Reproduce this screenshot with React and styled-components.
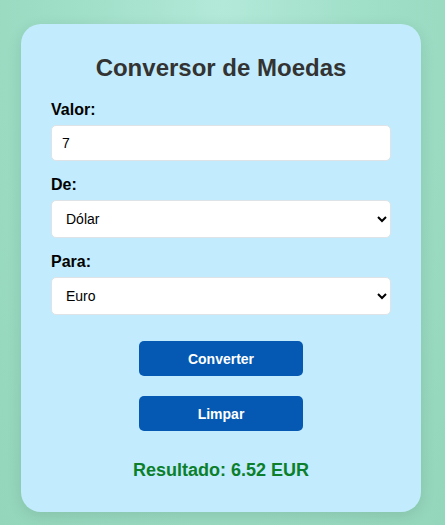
import React, { useState } from 'react';
import styled, { createGlobalStyle } from 'styled-components';

const GlobalStyle = createGlobalStyle`
  html, body {
    margin: 0;
    padding: 0;
  }
  body {
    min-height: 525px;
    font-family: "Liberation Sans", Arial, sans-serif;
    background: radial-gradient(ellipse at 50% 0%, #b3e9d9 0%, #a0dfc8 45%, #93d6bb 100%);
  }
`;

const Page = styled.div`
  display: flex;
  justify-content: center;
  padding: 24px 3px 14px 0;
`;

const Card = styled.div`
  width: 400px;
  box-sizing: border-box;
  padding: 30px 30px 31px;
  background: #c2ecfd;
  border-radius: 20px;
  box-shadow: 0 4px 15px rgba(0, 0, 0, 0.1);
  display: flex;
  flex-direction: column;
`;

const Title = styled.h2`
  margin: 0 0 19px;
  font-size: 24px;
  line-height: 28px;
  font-weight: bold;
  color: #333;
  text-align: center;
`;

const Label = styled.label`
  display: block;
  font-size: 16px;
  line-height: 18px;
  font-weight: bold;
  color: #000;
  margin-bottom: 6px;
`;

const Field = styled.div`
  margin-bottom: ${p => p.$last ? '26px' : '15px'};
`;

const Input = styled.input`
  display: block;
  width: 100%;
  height: 36px;
  box-sizing: border-box;
  padding: 0 10px;
  border: 1px solid #dde3e6;
  border-radius: 5px;
  background: #fff;
  font-family: "Liberation Sans", Arial, sans-serif;
  font-size: 14px;
  color: #000;
  outline: none;
`;

const Select = styled.select`
  display: block;
  width: 100%;
  height: 38px;
  box-sizing: border-box;
  padding: 0 10px;
  border: 1px solid #dde3e6;
  border-radius: 5px;
  background: #fff;
  font-family: "Liberation Sans", Arial, sans-serif;
  font-size: 14px;
  color: #000;
  outline: none;
`;

const Button = styled.button`
  display: block;
  align-self: center;
  width: 164px;
  height: 35px;
  margin-bottom: ${p => p.$gap || '0'};
  border: none;
  border-radius: 5px;
  background: #0559b3;
  color: #fff;
  font-family: "Liberation Sans", Arial, sans-serif;
  font-size: 14px;
  font-weight: bold;
  cursor: pointer;
`;

const Result = styled.div`
  margin-top: 29px;
  text-align: center;
  font-size: 18px;
  line-height: 21px;
  font-weight: bold;
  color: #0b7f2c;
`;

export default function App() {
  const [valor, setValor] = useState('7');
  const [de, setDe] = useState('USD');
  const [para, setPara] = useState('EUR');

  return (
    <>
      <GlobalStyle />
      <Page>
        <Card>
          <Title>Conversor de Moedas</Title>
          <Field>
            <Label htmlFor="valor">Valor:</Label>
            <Input id="valor" type="number" value={valor} onChange={e => setValor(e.target.value)} />
          </Field>
          <Field>
            <Label htmlFor="de">De:</Label>
            <Select id="de" value={de} onChange={e => setDe(e.target.value)}>
              <option value="USD">Dólar</option>
              <option value="EUR">Euro</option>
              <option value="BRL">Real</option>
            </Select>
          </Field>
          <Field $last>
            <Label htmlFor="para">Para:</Label>
            <Select id="para" value={para} onChange={e => setPara(e.target.value)}>
              <option value="USD">Dólar</option>
              <option value="EUR">Euro</option>
              <option value="BRL">Real</option>
            </Select>
          </Field>
          <Button $gap="20px">Converter</Button>
          <Button>Limpar</Button>
          <Result>Resultado: 6.52 EUR</Result>
        </Card>
      </Page>
    </>
  );
}
